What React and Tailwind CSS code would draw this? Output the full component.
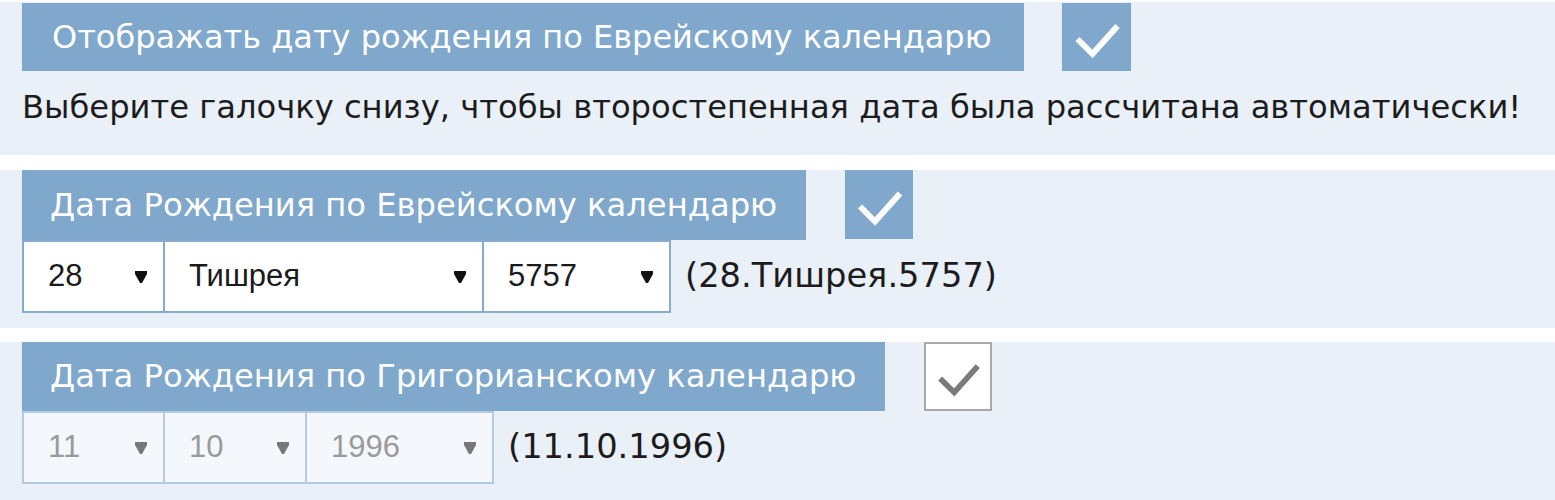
import React from "react";

const Check = ({ color }) => (
  <svg width="100%" height="100%" viewBox="0 0 68 68">
    <polyline points="15,36 30,51 55,23" fill="none" stroke={color} strokeWidth="6" />
  </svg>
);

const Arrow = ({ color }) => (
  <svg width="12" height="12" viewBox="0 0 12 12">
    <polygon points="0,0 12,0 12,3 7,12 5,12 0,3" fill={color} />
  </svg>
);

const Sel = ({ value, w, first, disabled }) => (
  <div
    className={
      "h-[73px] border-2 flex items-center justify-between pl-[24px] pr-[16px] text-[31px] " +
      (first ? "" : "-ml-[2px] ") +
      (disabled
        ? "bg-[#f4f7fb] border-[#b3cbe2] text-[#9a9a9a]"
        : "bg-white border-[#86abcf] text-[#1a1a1a]")
    }
    style={{ width: w, fontFamily: '"Liberation Sans", Arial, sans-serif' }}
  >
    <span>{value}</span>
    <Arrow color={disabled ? "#777777" : "#111111"} />
  </div>
);

export default function App() {
  return (
    <div
      className="w-[1555px] h-[500px] bg-white overflow-hidden"
      style={{ fontFamily: '"DejaVu Sans", Verdana, sans-serif' }}
    >
      <div className="mt-[2px] h-[153px] bg-[#e9f0f8] pt-[1px] pl-[22px]">
        <div className="flex items-start">
          <div className="w-[1002px] h-[68px] bg-[#80a8cc] text-white pl-[30px] flex items-center text-[32px] whitespace-nowrap">
            Отображать дату рождения по Еврейскому календарю
          </div>
          <div className="ml-[38px] w-[69px] h-[68px] bg-[#80a8cc]">
            <Check color="#ffffff" />
          </div>
        </div>
        <div className="mt-[17px] text-[32.2px] leading-[38px] text-[#1c1c1c] whitespace-nowrap">
          Выберите галочку снизу, чтобы второстепенная дата была рассчитана автоматически!
        </div>
      </div>

      <div className="mt-[15px] h-[158px] bg-[#e9f0f8] pl-[22px]">
        <div className="flex items-start">
          <div className="w-[784px] h-[70px] bg-[#80a8cc] text-white pl-[28px] flex items-center text-[32.2px] whitespace-nowrap">
            Дата Рождения по Еврейскому календарю
          </div>
          <div className="ml-[39px] w-[68px] h-[69px] bg-[#80a8cc]">
            <Check color="#ffffff" />
          </div>
        </div>
        <div className="flex items-center">
          <Sel value="28" w={143} first />
          <Sel value="Тишрея" w={321} />
          <Sel value="5757" w={189} />
          <div className="ml-[14px] text-[33.7px] text-[#1c1c1c] whitespace-nowrap">(28.Тишрея.5757)</div>
        </div>
      </div>

      <div className="mt-[14px] h-[158px] bg-[#e9f0f8] pl-[22px]">
        <div className="flex items-start">
          <div className="w-[863px] h-[69px] bg-[#80a8cc] text-white pl-[28px] flex items-center text-[32.2px] whitespace-nowrap">
            Дата Рождения по Григорианскому календарю
          </div>
          <div className="ml-[39px] w-[68px] h-[69px] bg-white border-2 border-[#a8a8a8]">
            <Check color="#7a7a7a" />
          </div>
        </div>
        <div className="flex items-center">
          <Sel value="11" w={143} first disabled />
          <Sel value="10" w={144} disabled />
          <Sel value="1996" w={189} disabled />
          <div className="ml-[14px] text-[33.7px] text-[#1c1c1c] whitespace-nowrap">(11.10.1996)</div>
        </div>
      </div>
    </div>
  );
}
